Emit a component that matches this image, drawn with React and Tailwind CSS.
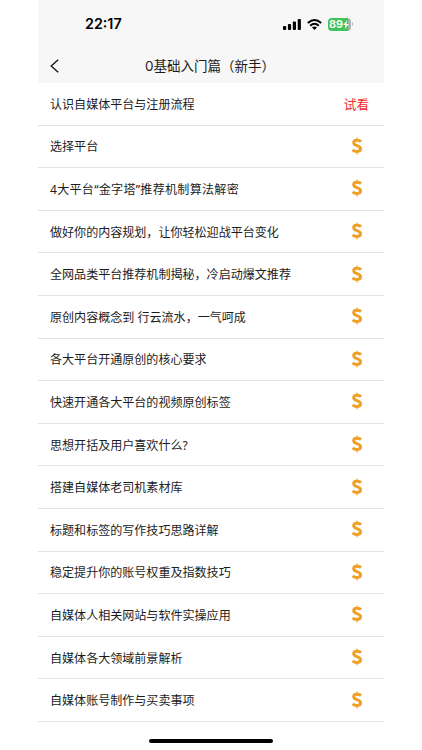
const lessons = [
  '选择平台',
  '4大平台“金字塔”推荐机制算法解密',
  '做好你的内容规划，让你轻松迎战平台变化',
  '全网品类平台推荐机制揭秘，冷启动爆文推荐',
  '原创内容概念到 行云流水，一气呵成',
  '各大平台开通原创的核心要求',
  '快速开通各大平台的视频原创标签',
  '思想开括及用户喜欢什么?',
  '搭建自媒体老司机素材库',
  '标题和标签的写作技巧思路详解',
  '稳定提升你的账号权重及指数技巧',
  '自媒体人相关网站与软件实操应用',
  '自媒体各大领域前景解析',
  '自媒体账号制作与买卖事项',
];

function StatusBar() {
  return (
    <div className="flex h-12 items-center justify-between pl-[47px] pr-[31px]">
      <span className="font-['Inter','Liberation_Sans',sans-serif] text-[14.3px] leading-none font-semibold">22:17</span>
      <div className="flex items-center gap-[6px]">
        <svg width="18" height="11" viewBox="0 0 18 11">
          <rect x="0" y="7" width="3.2" height="4" rx="0.9" />
          <rect x="4.9" y="5" width="3.2" height="6" rx="0.9" />
          <rect x="9.8" y="2.6" width="3.2" height="8.4" rx="0.9" />
          <rect x="14.7" y="0" width="3.2" height="11" rx="0.9" />
        </svg>
        <svg width="15" height="11" viewBox="0 0 15 11" fill="none" stroke="#000" strokeWidth="2">
          <path d="M.8 4.1Q7.5-2 14.2 4.1" />
          <path d="M3.2 6.7Q7.5 2.9 11.8 6.7" />
          <path d="M5 8.4Q7.5 6.5 10 8.4L7.5 11Z" fill="#000" stroke="none" />
        </svg>
        <div className="flex items-center gap-px">
          <div className="flex h-[13px] w-[23px] items-center justify-center rounded-[4px] bg-[linear-gradient(90deg,#3fc35b_89%,#a9b5ab_89%)] text-white">
            <span className="font-['Inter','Liberation_Sans',sans-serif] text-[11px] leading-none font-semibold">89</span>
            <svg width="6" height="9" viewBox="0 0 6 9" fill="#fff">
              <path d="M4.2 0L.2 5h2.3L1.8 9l4-5.1H3.4z" />
            </svg>
          </div>
          <div className="h-1 w-[1.5px] rounded-r-full bg-[#b9b9b9]" />
        </div>
      </div>
    </div>
  );
}

function Coin() {
  return (
    <svg className="mr-[6px] mb-px" width="12" height="18" viewBox="0 0 12 18" fill="none" stroke="#f0a024">
      <path d="M6 .6v2.4M6 14.8v2.6" strokeWidth="1.8" opacity="0.6" />
      <path d="M10 4.8C8.4 2.9 2.7 2.5 2.7 5.8C2.7 9.1 9.5 8.3 9.5 11.7C9.5 15.2 4 15.1 1.6 12.9" strokeWidth="3" />
    </svg>
  );
}

const row = 'flex h-[42.6px] items-center justify-between border-b border-[#e3e3e3] pl-3 pr-[15px]';

export default function App() {
  return (
    <div className="flex h-[750px] w-[422px] justify-center bg-white font-['Inter','Noto_Sans_CJK_SC',sans-serif] text-[#1c1c1c]">
      <main className="flex w-[346px] flex-col">
        <header className="h-[83px] bg-[#f7f7f7] text-black">
          <StatusBar />
          <div className="grid h-[35px] grid-cols-[40px_1fr_40px] items-center">
            <svg className="ml-3" width="10" height="14" viewBox="0 0 10 14" fill="none" stroke="#111" strokeWidth="1.3">
              <path d="M8.2.8L1.2 7l7 6.2" />
            </svg>
            <h1 className="pr-[2px] text-center text-[13.5px] leading-5 whitespace-nowrap text-[#1c1c1c]">0基础入门篇（新手）</h1>
          </div>
        </header>
        <ul className="font-['Noto_Sans','Noto_Sans_CJK_SC',sans-serif] text-[12.05px] leading-5">
          <li className={row}>
            <span className="pt-[2px]">认识自媒体平台与注册流程</span>
            <span className="pt-[2px] text-[12.6px] text-[#f52a2a]">试看</span>
          </li>
          {lessons.map((title) => (
            <li key={title} className={row}>
              <span className={title.startsWith('4') ? 'pt-[2px] tracking-[0.28px]' : 'pt-[2px]'}>{title}</span>
              <Coin />
            </li>
          ))}
        </ul>
        <div className="mx-auto mt-auto mb-[7px] h-1 w-[124px] rounded-full bg-black" />
      </main>
    </div>
  );
}
